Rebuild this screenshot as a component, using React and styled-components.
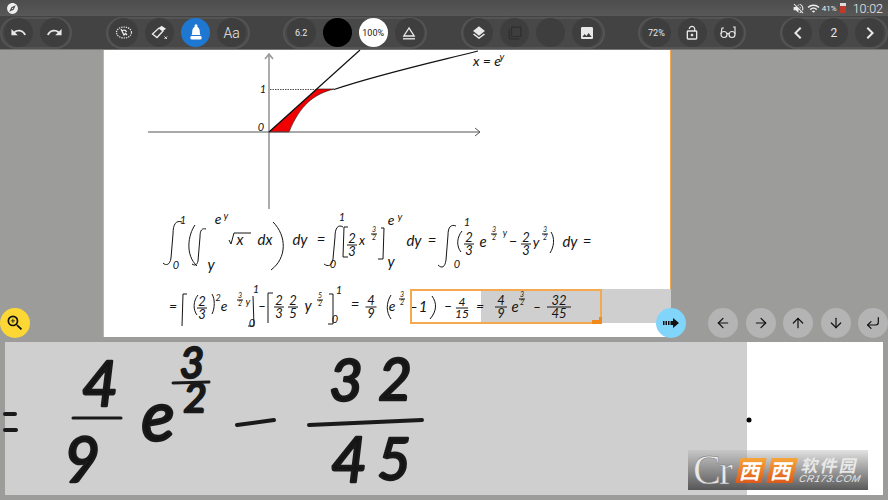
import React from "react";
import styled, { createGlobalStyle } from "styled-components";
import {
  MdUndo,
  MdRedo,
  MdLayers,
  MdImage,
  MdFilterNone,
  MdLockOpen,
  MdChevronLeft,
  MdChevronRight,
  MdZoomIn,
  MdWifi,
  MdVolumeOff,
  MdExplore,
} from "react-icons/md";
import { ArrowLeft, ArrowRight, ArrowUp, ArrowDown, CornerDownLeft } from "lucide-react";

const Global = createGlobalStyle`
  html, body { margin: 0; padding: 0; background: #9c9d9b; }
  body { font-family: "Roboto", "Liberation Sans", sans-serif; }
`;

const Screen = styled.div`
  width: 888px;
  height: 500px;
  display: flex;
  flex-direction: column;
  overflow: hidden;
  background: #9c9d9b;
`;

const StatusBar = styled.header`
  height: 16px;
  display: flex;
  align-items: center;
  justify-content: space-between;
  padding: 0 5px 0 6px;
  background: linear-gradient(#4d4d4d, #585858);
  color: #eee;
`;

const StatusRight = styled.div`
  display: flex;
  align-items: center;
  gap: 2px;
  font-size: 8px;
`;

const Clock = styled.span`
  font-size: 12.5px;
  font-weight: 300;
  margin-left: 5px;
`;

const Battery = styled.span`
  width: 6px;
  height: 10px;
  background: linear-gradient(#ddd 30%, #c0392b 30%);
  margin-left: 1px;
`;

const Toolbar = styled.nav`
  height: 34px;
  display: flex;
  align-items: center;
  justify-content: space-between;
  background: #434343;
  border-bottom: 1px solid #777;
  box-sizing: border-box;
`;

const Group = styled.div`
  height: 32px;
  box-sizing: border-box;
  display: flex;
  align-items: center;
  gap: 7px;
  padding: 0 1.5px;
  border: 2px solid #545454;
  border-radius: 16px;
  background: #484848;
`;

const Tool = styled.div`
  width: 29px;
  height: 29px;
  border-radius: 50%;
  display: flex;
  align-items: center;
  justify-content: center;
  background: ${({ $bg }) => $bg || "#3e3e3e"};
  color: ${({ $fg }) => $fg || "#e8e8e8"};
  font-size: ${({ $size }) => $size || 9}px;
  font-weight: ${({ $thin }) => ($thin ? 300 : 400)};
`;

const Workspace = styled.main`
  position: relative;
  height: 288px;
  padding-left: 103px;
  box-sizing: border-box;
`;

const Page = styled.section`
  position: relative;
  width: 568px;
  height: 287px;
  box-sizing: border-box;
  background: #fff;
  border-left: 1px solid #f5a94e;
  border-right: 1px solid #f5a94e;
`;

const Canvas = styled.svg`
  position: absolute;
  left: 0;
  top: 0;
  width: 100%;
  height: 100%;
  overflow: visible;
`;

const Shade = styled.div`
  position: absolute;
  left: 377px;
  right: -1px;
  top: 239px;
  height: 34px;
  background: #cfcfcf;
`;

const Frame = styled.div`
  position: absolute;
  left: 306px;
  top: 239px;
  width: 192px;
  height: 35px;
  box-sizing: border-box;
  border: 2px solid #f5a94e;
`;

const Handle = styled.div`
  position: absolute;
  right: -2px;
  bottom: -2px;
  width: 10px;
  height: 4px;
  background: #f08a1c;
  &::after {
    content: "";
    position: absolute;
    right: 0;
    bottom: 0;
    width: 3px;
    height: 7px;
    background: #f08a1c;
  }
`;

const Floating = styled.div`
  position: absolute;
  width: 30px;
  height: 30px;
  top: 258px;
  left: ${({ $x }) => $x}px;
  border-radius: 50%;
  display: flex;
  align-items: center;
  justify-content: center;
  background: ${({ $bg }) => $bg};
  color: #111;
`;

const NavRow = styled.div`
  position: absolute;
  left: 708px;
  top: 258px;
  display: flex;
  gap: 7.5px;
`;

const NavButton = styled.div`
  width: 30px;
  height: 30px;
  border-radius: 50%;
  display: flex;
  align-items: center;
  justify-content: center;
  background: #b4b4b4;
  color: #111;
`;

const Panel = styled.section`
  position: relative;
  margin: 4px 5px 0;
  height: 153px;
  display: flex;
  background: #fff;
  box-sizing: border-box;
`;

const PanelShade = styled.div`
  width: 742px;
  background: #cfcfcf;
`;

const Watermark = styled.div`
  position: absolute;
  left: 683px;
  top: 108px;
  width: 180px;
  height: 40px;
  display: flex;
  align-items: center;
  background: linear-gradient(rgba(190, 190, 190, 0.45), rgba(80, 80, 80, 0.95));
`;

const Logo = styled.span`
  flex: 0 0 50px;
  padding-left: 5px;
  box-sizing: border-box;
  white-space: nowrap;
  font: 42px/40px "Liberation Serif", serif;
  letter-spacing: -2px;
  color: #e8e8e8;
  -webkit-text-stroke: 0.5px #777;
`;

const Chip = styled.span`
  width: 26px;
  height: 25px;
  margin-right: 5px;
  display: flex;
  align-items: center;
  justify-content: center;
  transform: skewX(-12deg);
  background: linear-gradient(#f7a63a, #dd5a1a);
  color: #fff;
  font: 700 21px/25px "Noto Sans CJK SC", sans-serif;
`;

const Brand = styled.div`
  margin-left: 1px;
  display: flex;
  flex-direction: column;
  align-items: flex-start;
  color: #e8e8e8;
  transform: skewX(-12deg);
`;

const BrandName = styled.span`
  font: 700 17px/18px "Noto Sans CJK SC", sans-serif;
  letter-spacing: 2px;
`;

const BrandUrl = styled.span`
  font: italic 10px/10px "Liberation Sans", sans-serif;
  letter-spacing: 0.5px;
`;

const Ink = styled.text`
  font-family: "Lato", "Liberation Sans", sans-serif;
  font-style: italic;
  font-size: ${({ $s }) => $s}px;
  fill: #141414;
  text-anchor: middle;
`;

const BigInk = styled(Ink)`
  stroke: #1a1a1a;
  stroke-width: 2.5px;
  stroke-linejoin: round;
`;

// small svg icons that the icon packs do not have
const Lasso = () => (
  <svg width="18" height="15" viewBox="0 0 18 15" fill="none" stroke="#eee">
    <ellipse cx="9" cy="7.500" rx="7.500" ry="5.500" strokeDasharray="1.300 1" strokeWidth="1.200" />
    <path d="M6 4l3 6 1.500-1.500L12 10M7.500 5.500a3 2.500 0 0 1 4 1.500" strokeWidth="1.300" />
  </svg>
);

const Eraser = () => (
  <svg width="18" height="16" viewBox="0 0 18 16">
    <path d="M1.500 9 8 3l4 3-6 6.500z" fill="none" stroke="#eee" strokeWidth="1.300" />
    <path d="M8 3l2.500-2.200 4.500 3L12 6z" fill="#eee" />
    <path d="M13.500 11.500l2.500 2.500M16 11.500 13.500 14" stroke="#eee" strokeWidth="1" />
  </svg>
);

const Nib = () => (
  <svg width="14" height="17" viewBox="0 0 14 17" fill="#fff">
    <circle cx="7" cy="1.800" r="1.500" />
    <path d="M7 2c2.500 1 3.800 3 3.800 5.500 0 1.500.2 2.500.7 3.500h-9c.5-1 .7-2 .7-3.500C3.200 5 4.500 3 7 2z" />
    <rect x="1.500" y="12" width="11" height="3.500" rx="1.200" />
  </svg>
);

const Triangle = () => (
  <svg width="16" height="14" viewBox="0 0 16 14" fill="none" stroke="#eee" strokeWidth="1.300">
    <path d="M8 2 2.800 10h10.400z" />
    <path d="M2 12.800h12" />
  </svg>
);

const Glasses = () => (
  <svg width="16" height="13" viewBox="0 0 16 13" fill="none" stroke="#e8e8e8" strokeWidth="1.200">
    <circle cx="4" cy="8.500" r="3" />
    <circle cx="12" cy="8.500" r="3" />
    <path d="M7 8c.6-.6 1.400-.6 2 0M1 8l1-6h2M15 8V1h-2" />
  </svg>
);

const Fat = () => (
  <svg width="16" height="10" viewBox="0 0 16 10">
    <path d="M0 3h1.500v4H0zM2.500 3H4v4H2.500zM5 3h1.500v4H5zM7.500 3H10V0l6 5-6 5V7H7.500z" fill="#111" />
  </svg>
);

const frac = (x, y, n, d, s, w) => (
  <g key={`${x}-${y}`}>
    <Ink x={x} y={y - 2} $s={s}>{n}</Ink>
    <line x1={x - w / 2} x2={x + w / 2} y1={y} y2={y} stroke="#141414" strokeWidth="1" />
    <Ink x={x} y={y + s * 0.85} $s={s}>{d}</Ink>
  </g>
);

// [x, y baseline, text, size] in screen coordinates
const tokens = [
  [263, 93, "1", 11], [261, 131, "0", 11], [487, 66, "x = e", 14], [502, 60, "y", 10],
  [183, 224, "1", 11], [176, 269, "0", 11], [218, 224, "e", 14], [226, 219, "y", 10], [211, 270, "y", 15],
  [240, 245, "x", 15], [265, 245, "dx", 15], [300, 245, "dy", 15], [321, 245, "=", 15],
  [342, 221, "1", 11], [333, 268, "0", 11], [362, 245, "x", 13], [391, 225, "e", 14], [400, 220, "y", 10],
  [391, 267, "y", 15], [414, 246, "dy", 15], [432, 246, "=", 15],
  [467, 226, "1", 11], [457, 268, "0", 11], [483, 247, "e", 15], [505, 236, "y", 9], [513, 246, "−", 14],
  [536, 247, "y", 14], [570, 247, "dy", 15], [587, 247, "=", 15],
  [173, 311, "=", 14], [218, 301, "2", 9], [224, 311, "e", 14], [248, 305, "y", 10],
  [256, 293, "1", 11], [252, 327, "0", 11], [262, 310, "−", 12], [308, 311, "y", 15],
  [339, 294, "1", 11], [335, 323, "0", 11], [355, 310, "=", 15], [392, 311, "e", 14],
  [414, 311, "−", 11], [423, 312, "1", 15], [448, 311, "−", 13], [480, 311, "=", 14],
  [515, 312, "e", 15], [537, 311, "−", 12],
];

const fractions = [
  [352, 245, "2", "3", 13, 10], [374, 234, "3", "2", 7, 6], [469, 244, "2", "3", 13, 10],
  [494, 234, "3", "2", 7, 6], [526, 244, "2", "3", 13, 10], [545, 234, "3", "2", 7, 6],
  [202, 308, "2", "3", 13, 10], [240, 300, "3", "2", 7, 6], [279, 307, "2", "3", 13, 10],
  [293, 307, "2", "5", 13, 10], [320, 300, "5", "2", 7, 6], [371, 307, "4", "9", 13, 11],
  [402, 299, "3", "2", 7, 6], [462, 308, "4", "15", 12, 12], [501, 307, "4", "9", 13, 12],
  [522, 299, "3", "2", 7, 6], [559, 307, "32", "45", 13, 24],
];

const strokes = [
  // integrals
  "M182 222c-6-2-9 2-9 12l-2 24c-1 7-5 8-8 5",
  "M206 229c-4-1-6 1-6 8l-2 24c-1 4-3 5-6 3",
  "M343 227c-5-3-8 1-8 10l-2 22c-1 7-5 8-9 5",
  "M456 226c-5-2-8 1-8 9l-2 25c-1 7-4 9-8 5",
  // big brackets
  "M195 225c-7 10-10 30 2 41",
  "M273 222c14 14 14 36 -2 48",
  "M348 227l-4 0 -1 30h5M381 228l3 0-1 31h-5",
  "M462 231c-5 6-6 15-1 21M551 232c4 6 3 15-1 21",
  "M187 294l-4 0-1 32M212 294c3 5 3 14 0 20M198 295c-5 6-5 15-1 20",
  "M253 296l1 30h-6M273 293l-5 0 0 30M329 294l4 0 0 30h-5",
  "M391 295c-5 8-5 17 0 24M432 296c5 7 5 15 -2 23",
  // root sign
  "M229 240l2 4 3-11h17",
];

const bigTokens = [
  [100, 406, "4", 62], [82, 482, "9", 62], [158, 441, "e", 70], [192, 378, "3", 42], [195, 412, "2", 40],
  [346, 401, "3", 58], [395, 400, "2", 58], [349, 482, "4", 62], [394, 480, "5", 58],
];

const App = () => (
  <Screen>
    <Global />
    <StatusBar>
      <MdExplore size={13} />
      <StatusRight>
        <MdVolumeOff size={13} />
        <MdWifi size={13} />
        <span>41%</span>
        <Battery />
        <Clock>10:02</Clock>
      </StatusRight>
    </StatusBar>

    <Toolbar>
      <Group>
        <Tool><MdUndo size={17} /></Tool>
        <Tool><MdRedo size={17} /></Tool>
      </Group>
      <Group>
        <Tool><Lasso /></Tool>
        <Tool><Eraser /></Tool>
        <Tool $bg="#1e78d2"><Nib /></Tool>
        <Tool $size={14} $thin>Aa</Tool>
      </Group>
      <Group>
        <Tool>6.2</Tool>
        <Tool $bg="#000" />
        <Tool $bg="#fff" $fg="#222">100%</Tool>
        <Tool><Triangle /></Tool>
      </Group>
      <Group>
        <Tool><MdLayers size={16} /></Tool>
        <Tool $fg="#2e2e2e"><MdFilterNone size={14} /></Tool>
        <Tool />
        <Tool><MdImage size={16} /></Tool>
      </Group>
      <Group>
        <Tool>72%</Tool>
        <Tool><MdLockOpen size={16} /></Tool>
        <Tool><Glasses /></Tool>
      </Group>
      <Group>
        <Tool><MdChevronLeft size={24} /></Tool>
        <Tool $size={12}>2</Tool>
        <Tool><MdChevronRight size={24} /></Tool>
      </Group>
    </Toolbar>

    <Workspace>
      <Page>
        <Shade />
        <Canvas viewBox="104 50 566 287">
          <path d="M269 132 317 89h17c-20 5-34 16-45 43z" fill="#f00000" stroke="#111" strokeWidth="0.6" />
          <path d="M269 54v155M265 59l4-5 4 5" fill="none" stroke="#999" strokeWidth="1.600" />
          <path d="M148 132h332M475 128l5 4-5 4" fill="none" stroke="#555" strokeWidth="1" />
          <path d="M270 89.500h47" stroke="#222" strokeWidth="0.8" strokeDasharray="1.500 1" />
          <path d="M269 132 360 50" stroke="#111" strokeWidth="1.200" />
          <path d="M334 89.500C380 74 430 63 478 51" fill="none" stroke="#111" strokeWidth="1.200" />
          {strokes.map((d) => (
            <path key={d} d={d} fill="none" stroke="#141414" strokeWidth="1" />
          ))}
          {tokens.map(([x, y, t, s]) => (
            <Ink key={`${x}-${y}`} x={x} y={y} $s={s}>{t}</Ink>
          ))}
          {fractions.map(([x, y, n, d, s, w]) => frac(x, y, n, d, s, w))}
        </Canvas>
        <Frame><Handle /></Frame>
      </Page>
      <Floating $x={0} $bg="#fdd835"><MdZoomIn size={20} /></Floating>
      <Floating $x={656} $bg="#81d4fa"><Fat /></Floating>
      <NavRow>
        <NavButton><ArrowLeft size={16} strokeWidth={1.8} /></NavButton>
        <NavButton><ArrowRight size={16} strokeWidth={1.8} /></NavButton>
        <NavButton><ArrowUp size={16} strokeWidth={1.8} /></NavButton>
        <NavButton><ArrowDown size={16} strokeWidth={1.8} /></NavButton>
        <NavButton><CornerDownLeft size={16} strokeWidth={1.8} /></NavButton>
      </NavRow>
    </Workspace>

    <Panel>
      <PanelShade />
      <Canvas viewBox="5 342 878 153">
        <g stroke="#1a1a1a" strokeLinecap="round" fill="none">
          <path d="M5 414h10M5 430h11" strokeWidth="4" />
          <path d="M73 418h48M173 383l36-1" strokeWidth="3" />
          <path d="M237 425 274 420M309 425 422 420" strokeWidth="4" />
        </g>
        <circle cx="749" cy="420" r="2.500" fill="#000" />
        {bigTokens.map(([x, y, t, s]) => (
          <BigInk key={`${x}-${y}`} x={x} y={y} $s={s}>{t}</BigInk>
        ))}
      </Canvas>
      <Watermark>
        <Logo>Cr</Logo>
        <Chip>西</Chip>
        <Chip>西</Chip>
        <Brand>
          <BrandName>软件园</BrandName>
          <BrandUrl>CR173.COM</BrandUrl>
        </Brand>
      </Watermark>
    </Panel>
  </Screen>
);

export default App;
